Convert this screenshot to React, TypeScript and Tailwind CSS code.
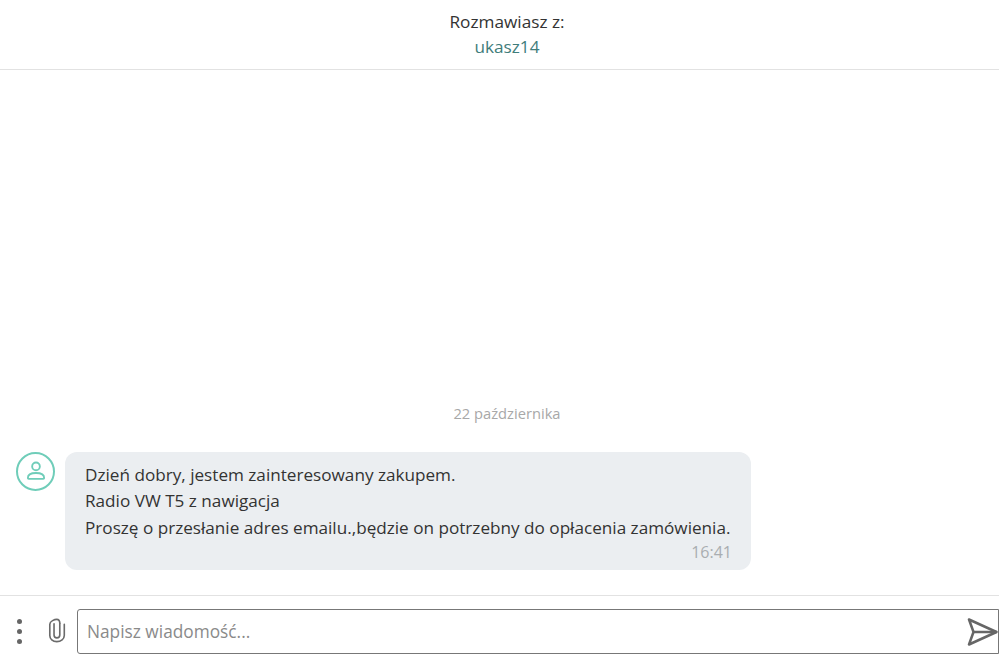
const font = "font-['Open_Sans',sans-serif]";

function UserAvatar() {
  return (
    <div className="ml-[1px] flex h-[39px] w-[39px] shrink-0 items-center justify-center rounded-full border-2 border-[#6fcdb9]">
      <svg width="22" height="22" viewBox="0 0 20 20" fill="none" stroke="#6fcdb9" strokeWidth="1.700">
        <circle cx="10" cy="5.800" r="3.500" />
        <path d="M2.600 16.400c0-3 2.500-4.600 7.400-4.600s7.400 1.600 7.400 4.600c0 .5-.3.8-.8.8H3.400c-.5 0-.8-.3-.8-.8z" />
      </svg>
    </div>
  );
}

function MoreDots() {
  return (
    <div className="flex w-[6px] flex-col gap-[5px]">
      <span className="h-[5px] w-[5px] rounded-full bg-[#666]" />
      <span className="h-[5px] w-[5px] rounded-full bg-[#666]" />
      <span className="h-[5px] w-[5px] rounded-full bg-[#666]" />
    </div>
  );
}

function Paperclip() {
  return (
    <svg width="18" height="25" viewBox="0 0 20 27" fill="none" stroke="#6b6b6b" strokeWidth="1.800" strokeLinecap="round">
      <path d="M6.700 6v12.500c0 2 1.300 3.200 3.200 3.200s3.200-1.200 3.200-3.200V5.500" />
      <path d="M13.100 5.500C13.100 3 11.800 1.200 9.700 1.200S2 3 2 6.500v12.500c0 3.800 3.200 6.800 7.800 6.800s8.300-3 8.300-6.800V6.500" />
    </svg>
  );
}

function SendIcon() {
  return (
    <svg width="31" height="28" viewBox="0 0 31 28" fill="none" stroke="#666" strokeWidth="2.500" strokeLinejoin="round">
      <path d="M2 1.500 29.500 14 2 26.500 6.500 14z" />
      <path d="M6.500 14h23" />
    </svg>
  );
}

export default function App() {
  return (
    <div className={`${font} flex h-[665px] w-[999px] flex-col overflow-hidden bg-white text-[#333]`}>
      <header className="flex h-[70px] shrink-0 flex-col items-center border-b border-[#e2e2e2] pl-[15px] pt-[9px] text-[17.200px] leading-[25px]">
        <p>Rozmawiasz z:</p>
        <p className="text-[#3f7d7b]">ukasz14</p>
      </header>

      <main className="flex flex-1 flex-col justify-end">
        <p className="mb-[29px] pl-[15px] text-center text-[14.700px] leading-5 text-[#a8a8a8]">22 października</p>
        <div className="mb-[25px] flex items-start gap-[10px] pl-[15px]">
          <UserAvatar />
          <div className="w-[686px] rounded-xl bg-[#ebeef1] pb-[7px] pl-5 pr-[19px] pt-[10px] text-[17.150px] leading-[26.500px] text-[#333]">
            <p>Dzień dobry, jestem zainteresowany zakupem.</p>
            <p>Radio VW T5 z nawigacja</p>
            <p className="whitespace-nowrap">Proszę o przesłanie adres emailu.,będzie on potrzebny do opłacenia zamówienia.</p>
            <p className="text-right text-[16px] leading-[22px] text-[#a9adb0]">16:41</p>
          </div>
        </div>
      </main>

      <footer className="flex h-[70px] shrink-0 items-center border-t border-[#e2e2e2] pt-[1px]">
        <div className="ml-[17px] mr-[25px]">
          <MoreDots />
        </div>
        <div className="mr-[11px] mb-[1px]">
          <Paperclip />
        </div>
        <div className="relative mt-[1px] flex h-[45px] flex-1 items-center rounded-l-[3px] border border-[#777] pl-[9px] text-[17.300px] text-[#8a8a8a]">
          Napisz wiadomość...
          <div className="absolute right-0 top-[8px]">
            <SendIcon />
          </div>
        </div>
      </footer>
    </div>
  );
}
